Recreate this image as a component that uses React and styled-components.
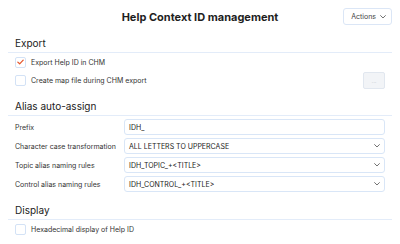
import React from "react";
import styled, { createGlobalStyle } from "styled-components";

const GlobalStyle = createGlobalStyle`
  body {
    margin: 0;
    background: #ffffff;
    font-family: Inter, "Liberation Sans", Arial, sans-serif;
    color: #333;
  }
`;

const Chevron = ({ size = 6 }) => (
  <svg width={size} height={size * 0.6} viewBox="0 0 10 6" fill="none">
    <path d="M1 1l4 4 4-4" stroke="#555" strokeWidth="1.4" strokeLinecap="round" strokeLinejoin="round" />
  </svg>
);

const Check = () => (
  <svg width="7" height="6" viewBox="0 0 10 8" fill="none">
    <path d="M1.2 4.2l2.6 2.4L8.8 1.4" stroke="#e5562b" strokeWidth="1.8" strokeLinecap="round" strokeLinejoin="round" />
  </svg>
);

const Page = styled.div`
  width: 400px;
  height: 244px;
  box-sizing: border-box;
  padding: 8px 8px 0;
  display: flex;
  flex-direction: column;
`;

const Header = styled.div`
  display: grid;
  grid-template-columns: 1fr auto 1fr;
  align-items: center;
  height: 17px;
`;

const Title = styled.h1`
  grid-column: 2;
  margin: 0;
  font-size: 11px;
  font-weight: 700;
  color: #1e1e1e;
  letter-spacing: 0;
`;

const MenuButton = styled.button`
  grid-column: 3;
  justify-self: end;
  display: flex;
  align-items: center;
  gap: 4px;
  height: 17px;
  padding: 0 5px 0 7px;
  border: 1px solid #dbe6f6;
  border-radius: 3px;
  background: #fff;
  font-family: inherit;
  font-size: 7px;
  color: #444;
`;

const SectionTitle = styled.h2`
  margin: ${(p) => p.$gap}px 0 0;
  padding: 0 7px 2px;
  font-size: 10px;
  font-weight: 400;
  line-height: 14px;
  color: #222;
  border-bottom: 1px solid #e3ecf9;
`;

const CheckList = styled.div`
  display: flex;
  flex-direction: column;
  padding: 0 7px;
`;

const CheckRow = styled.label`
  display: flex;
  align-items: center;
  justify-content: space-between;
  height: 18px;
`;

const CheckLabel = styled.span`
  display: flex;
  align-items: center;
  gap: 5px;
  font-size: 7px;
  color: #333;
`;

const Box = styled.span`
  width: 11px;
  height: 11px;
  box-sizing: border-box;
  border: 1px solid #d3e2f6;
  border-radius: 2px;
  background: #fff;
  display: flex;
  align-items: center;
  justify-content: center;
`;

const DotsButton = styled.button`
  width: 22px;
  height: 17px;
  padding: 0;
  border: 1px solid #e1e7ef;
  border-radius: 2px;
  background: #f2f4f7;
  font-family: inherit;
  font-size: 6px;
  color: #c2c6cc;
`;

const Form = styled.div`
  display: grid;
  grid-template-columns: 109px 1fr;
  row-gap: 3px;
  padding: 3px 7px 0;
  align-items: center;
`;

const FieldLabel = styled.span`
  font-size: 7px;
  color: #333;
`;

const Field = styled.div`
  height: 16px;
  box-sizing: border-box;
  border: 1px solid #d9e6f7;
  border-radius: 3px;
  padding: 0 4px;
  display: flex;
  align-items: center;
  justify-content: space-between;
  font-size: 7px;
  color: #222;
`;

const fields = [
  { label: "Prefix", value: "IDH_" },
  { label: "Character case transformation", value: "ALL LETTERS TO UPPERCASE", select: true },
  { label: "Topic alias naming rules", value: "IDH_TOPIC_+<TITLE>", select: true },
  { label: "Control alias naming rules", value: "IDH_CONTROL_+<TITLE>", select: true },
];

const App = () => (
  <>
    <GlobalStyle />
    <Page>
      <Header>
        <Title>Help Context ID management</Title>
        <MenuButton>
          Actions <Chevron />
        </MenuButton>
      </Header>

      <SectionTitle $gap={11}>Export</SectionTitle>
      <CheckList>
        <CheckRow>
          <CheckLabel>
            <Box>
              <Check />
            </Box>
            Export Help ID in CHM
          </CheckLabel>
        </CheckRow>
        <CheckRow>
          <CheckLabel>
            <Box />
            Create map file during CHM export
          </CheckLabel>
          <DotsButton>...</DotsButton>
        </CheckRow>
      </CheckList>

      <SectionTitle $gap={10}>Alias auto-assign</SectionTitle>
      <Form>
        {fields.map((f) => (
          <React.Fragment key={f.label}>
            <FieldLabel>{f.label}</FieldLabel>
            <Field>
              <span>{f.value}</span>
              {f.select && <Chevron size={6} />}
            </Field>
          </React.Fragment>
        ))}
      </Form>

      <SectionTitle $gap={11}>Display</SectionTitle>
      <CheckList>
        <CheckRow>
          <CheckLabel>
            <Box />
            Hexadecimal display of Help ID
          </CheckLabel>
        </CheckRow>
      </CheckList>
    </Page>
  </>
);

export default App;
